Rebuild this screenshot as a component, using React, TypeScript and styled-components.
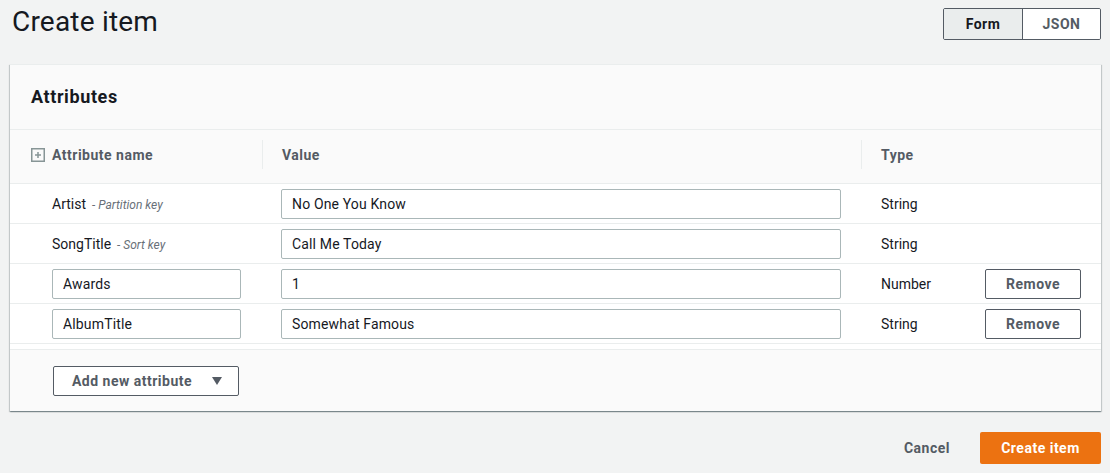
import styled, { createGlobalStyle } from 'styled-components';

interface Attribute {
  name: string;
  keyLabel?: string;
  value: string;
  type: string;
  editable: boolean;
}

const attributes: Attribute[] = [
  { name: 'Artist', keyLabel: 'Partition key', value: 'No One You Know', type: 'String', editable: false },
  { name: 'SongTitle', keyLabel: 'Sort key', value: 'Call Me Today', type: 'String', editable: false },
  { name: 'Awards', value: '1', type: 'Number', editable: true },
  { name: 'AlbumTitle', value: 'Somewhat Famous', type: 'String', editable: true },
];

const PlusBoxIcon = () => (
  <svg width="14" height="14" viewBox="0 0 14 14" aria-hidden="true">
    <rect x="0.75" y="0.75" width="12.5" height="12.5" fill="none" stroke="#879596" strokeWidth="1.5" />
    <path d="M7 4v6M4 7h6" stroke="#879596" strokeWidth="1.5" />
  </svg>
);

const CaretDown = () => (
  <svg width="10" height="8" viewBox="0 0 10 8" aria-hidden="true">
    <path d="M0 0h10L5 8z" fill="#545b64" />
  </svg>
);

const App = () => {
  return (
    <>
      <GlobalStyle />
      <StyledPage>
        <StyledTopBar>
          <StyledTitle>Create item</StyledTitle>
          <StyledToggle>
            <StyledToggleButton $active>Form</StyledToggleButton>
            <StyledToggleButton>JSON</StyledToggleButton>
          </StyledToggle>
        </StyledTopBar>

        <StyledPanel>
          <StyledPanelHeader>Attributes</StyledPanelHeader>
          <StyledTable>
            <StyledHeadRow>
              <StyledHeadCell $first>
                <StyledHeadLabel>
                  <PlusBoxIcon />
                  Attribute name
                </StyledHeadLabel>
              </StyledHeadCell>
              <StyledHeadCell>
                <StyledHeadLabel $divider>Value</StyledHeadLabel>
              </StyledHeadCell>
              <StyledHeadCell>
                <StyledHeadLabel $divider>Type</StyledHeadLabel>
              </StyledHeadCell>
            </StyledHeadRow>
            {attributes.map((attr) => (
              <StyledRow key={attr.name}>
                <StyledNameCell>
                  {attr.editable ? (
                    <StyledInput defaultValue={attr.name} />
                  ) : (
                    <StyledName>
                      {attr.name}
                      {attr.keyLabel && <StyledKeyLabel>- {attr.keyLabel}</StyledKeyLabel>}
                    </StyledName>
                  )}
                </StyledNameCell>
                <StyledValueCell>
                  <StyledInput defaultValue={attr.value} />
                </StyledValueCell>
                <StyledTypeCell>
                  <StyledType>{attr.type}</StyledType>
                  {attr.editable && <StyledOutlineButton>Remove</StyledOutlineButton>}
                </StyledTypeCell>
              </StyledRow>
            ))}
          </StyledTable>
          <StyledPanelFooter>
            <StyledOutlineButton $wide>
              Add new attribute
              <CaretDown />
            </StyledOutlineButton>
          </StyledPanelFooter>
        </StyledPanel>

        <StyledActions>
          <StyledLinkButton>Cancel</StyledLinkButton>
          <StyledPrimaryButton>Create item</StyledPrimaryButton>
        </StyledActions>
      </StyledPage>
    </>
  );
};

const GlobalStyle = createGlobalStyle`
  body {
    margin: 0;
    background: #f2f3f3;
    font-family: Roboto, "Liberation Sans", sans-serif;
    color: #16191f;
  }
`;

const StyledPage = styled.div`
  padding: 0 9px 0 10px;
`;

const StyledTopBar = styled.div`
  display: flex;
  justify-content: space-between;
  align-items: flex-start;
  height: 64px;
  padding-left: 2px;
`;

const StyledTitle = styled.h1`
  margin: 0;
  font-size: 28px;
  font-weight: 400;
  line-height: 44px;
  letter-spacing: 0.2px;
  color: #16191f;
`;

const StyledToggle = styled.div`
  display: flex;
  margin-top: 8px;
  border: 1px solid #545b64;
  border-radius: 2px;
  overflow: hidden;
`;

const StyledToggleButton = styled.button<{ $active?: boolean }>`
  width: ${({ $active }) => ($active ? '79px' : '77px')};
  height: 30px;
  border: none;
  border-right: ${({ $active }) => ($active ? '1px solid #545b64' : 'none')};
  background: ${({ $active }) => ($active ? '#eaeded' : '#ffffff')};
  color: ${({ $active }) => ($active ? '#16191f' : '#545b64')};
  font-family: inherit;
  font-size: 14px;
  font-weight: 700;
  letter-spacing: 0.5px;
  padding: 0;
`;

const StyledPanel = styled.div`
  background: #fafafa;
  box-shadow: 0 1px 1px 0 rgba(0, 28, 36, 0.3), 1px 1px 1px 0 rgba(0, 28, 36, 0.15),
    -1px 1px 1px 0 rgba(0, 28, 36, 0.15);
  border-top: 1px solid #eaeded;
`;

const StyledPanelHeader = styled.h2`
  margin: 0;
  height: 65px;
  display: flex;
  align-items: center;
  padding: 0 21px 2px;
  box-sizing: border-box;
  font-size: 18px;
  font-weight: 700;
  letter-spacing: 0.6px;
  color: #16191f;
  border-bottom: 1px solid #eaeded;
`;

const StyledTable = styled.div`
  background: #ffffff;
  padding-bottom: 5px;
  border-bottom: 1px solid #eaeded;
`;

const rowColumns = `
  display: grid;
  grid-template-columns: 252px 599px 1fr;
  border-bottom: 1px solid #eaeded;
`;

const StyledHeadRow = styled.div`
  ${rowColumns}
  height: 53px;
  background: #fafafa;
`;

const StyledHeadCell = styled.div<{ $first?: boolean }>`
  display: flex;
  align-items: center;
  padding-left: ${({ $first }) => ($first ? '21px' : '0')};
  padding-bottom: 4px;
`;

const StyledHeadLabel = styled.div<{ $divider?: boolean }>`
  display: flex;
  align-items: center;
  gap: 7px;
  height: 29px;
  padding-left: ${({ $divider }) => ($divider ? '19px' : '0')};
  border-left: ${({ $divider }) => ($divider ? '1px solid #eaeded' : 'none')};
  font-size: 14px;
  font-weight: 700;
  letter-spacing: 0.5px;
  color: #545b64;
`;

const StyledRow = styled.div`
  ${rowColumns}
  height: 39px;
`;

const StyledNameCell = styled.div`
  display: flex;
  align-items: center;
  padding: 0 21px 0 42px;
`;

const StyledValueCell = styled.div`
  display: flex;
  align-items: center;
  padding: 0 20px 0 19px;
`;

const StyledTypeCell = styled.div`
  display: flex;
  align-items: center;
  padding-left: 20px;
`;

const StyledName = styled.span`
  font-size: 14px;
  color: #16191f;
`;

const StyledKeyLabel = styled.span`
  margin-left: 6px;
  font-size: 12px;
  font-style: italic;
  color: #687078;
`;

const StyledType = styled.span`
  width: 104px;
  font-size: 14px;
  color: #16191f;
`;

const StyledInput = styled.input`
  box-sizing: border-box;
  width: 100%;
  height: 30px;
  padding: 0 10px;
  border: 1px solid #aab7b8;
  border-radius: 2px;
  background: #ffffff;
  font-family: inherit;
  font-size: 14px;
  letter-spacing: 0.15px;
  color: #16191f;
  outline: none;
`;

const StyledOutlineButton = styled.button<{ $wide?: boolean }>`
  display: flex;
  align-items: center;
  justify-content: center;
  gap: 20px;
  box-sizing: border-box;
  width: ${({ $wide }) => ($wide ? '186px' : '96px')};
  height: 30px;
  padding: ${({ $wide }) => ($wide ? '0 0 0 2px' : '0')};
  border: 1px solid #545b64;
  border-radius: 2px;
  background: #ffffff;
  color: #545b64;
  font-family: inherit;
  font-size: 14px;
  font-weight: 700;
  letter-spacing: 0.5px;
`;

const StyledPanelFooter = styled.div`
  padding: 16px 0 15px 43px;
`;

const StyledActions = styled.div`
  display: flex;
  justify-content: flex-end;
  align-items: center;
  gap: 10px;
  margin-top: 21px;
`;

const StyledLinkButton = styled.button`
  height: 32px;
  padding: 0 20px;
  border: none;
  background: transparent;
  color: #545b64;
  font-family: inherit;
  font-size: 14px;
  font-weight: 700;
  letter-spacing: 0.5px;
`;

const StyledPrimaryButton = styled.button`
  width: 121px;
  height: 32px;
  padding: 0;
  border: none;
  border-radius: 2px;
  background: #ec7211;
  color: #ffffff;
  font-family: inherit;
  font-size: 14px;
  font-weight: 700;
  letter-spacing: 0.5px;
`;

export default App;
